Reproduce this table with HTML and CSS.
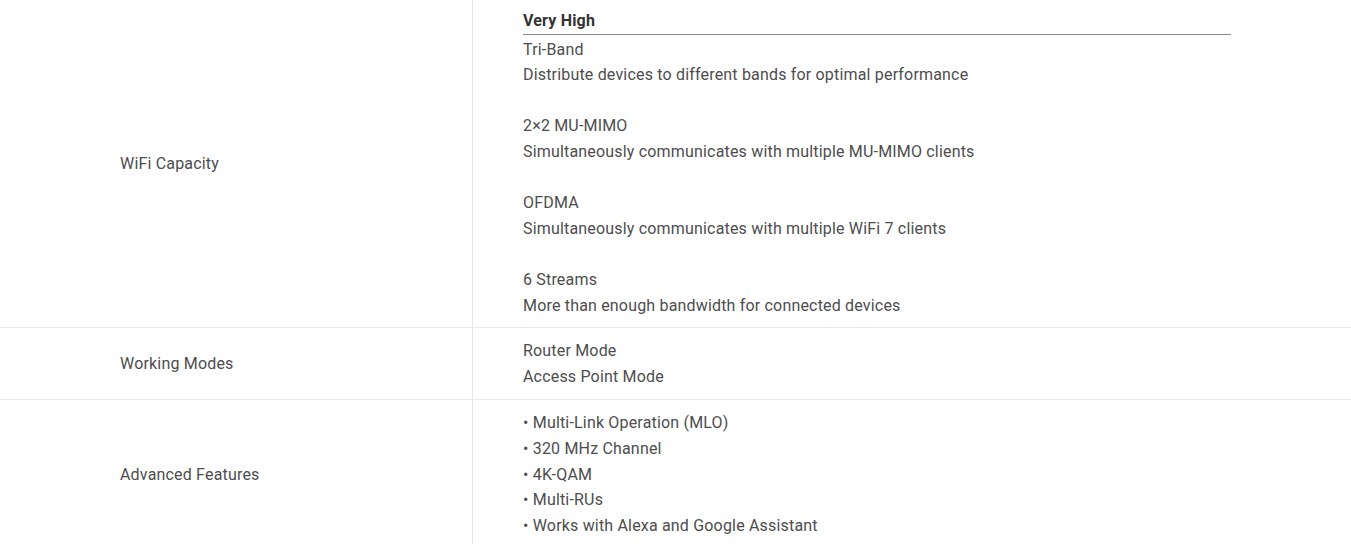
FILE: index.html
```html
<!DOCTYPE html>
<html lang="en">
<head>
  <meta charset="UTF-8" />
  <title>Specifications</title>
  <link rel="stylesheet" href="styles.css">
</head>
<body>

  <div class="spec-table">
    <div class="spec-row first">
      <div class="spec-label">WiFi Capacity</div>
      <div class="spec-value">
        <div class="spec-head">Very High</div>
        <p>Tri-Band<br>Distribute devices to different bands for optimal performance</p>
        <p>2×2 MU-MIMO<br>Simultaneously communicates with multiple MU-MIMO clients</p>
        <p>OFDMA<br>Simultaneously communicates with multiple WiFi 7 clients</p>
        <p>6 Streams<br>More than enough bandwidth for connected devices</p>
      </div>
    </div>

    <div class="spec-row">
      <div class="spec-label">Working Modes</div>
      <div class="spec-value">
        <p>Router Mode<br>Access Point Mode</p>
      </div>
    </div>

    <div class="spec-row">
      <div class="spec-label">Advanced Features</div>
      <div class="spec-value">
        <p>• Multi-Link Operation (MLO)<br>
           • 320 MHz Channel<br>
           • 4K-QAM<br>
           • Multi-RUs<br>
           • Works with Alexa and Google Assistant</p>
      </div>
    </div>
  </div>

</body>
</html>
```

FILE: styles.css
```css
body {
  margin: 0;
  background: #fff;
  font-family: Roboto, "Liberation Sans", sans-serif;
  font-size: 16px;
  line-height: 25.6px;
  letter-spacing: 0.18px;
  color: #4d4d4d;
}

.spec-row {
  display: grid;
  grid-template-columns: 473px 1fr;
  border-bottom: 1px solid #e8e8e8;
}

.spec-label {
  display: flex;
  align-items: center;
  padding-left: 120px;
  border-right: 1px solid #e8e8e8;
}

.spec-value {
  padding: 10px 120px 10px 50px;
}

.spec-row.first .spec-value {
  padding-top: 8px;
  padding-bottom: 9px;
}

.spec-head {
  font-weight: bold;
  color: #333;
  border-bottom: 1px solid #888;
  margin-bottom: 2px;
}

.spec-value p {
  margin: 0 0 25.6px;
}

.spec-value p:last-child {
  margin-bottom: 0;
}
```
